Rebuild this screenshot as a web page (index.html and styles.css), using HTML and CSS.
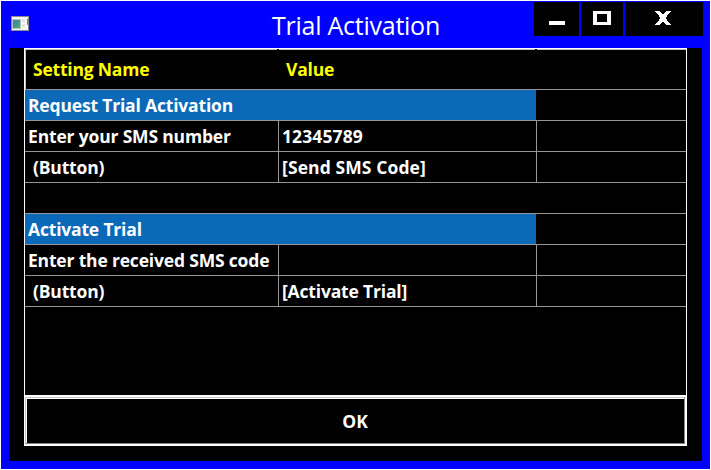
FILE: index.html
```html
<!DOCTYPE html>
<html lang="en">
<head>
<meta charset="utf-8">
<title>Trial Activation</title>
<link rel="stylesheet" href="styles.css">
</head>
<body>
<div class="window">
  <header class="titlebar">
    <svg class="app-icon" width="18" height="15" viewBox="0 0 18 15" shape-rendering="crispEdges">
      <defs><linearGradient id="g" x1="0" y1="0" x2="1" y2="1"><stop offset="0" stop-color="#4a78b4"/><stop offset=".5" stop-color="#3c9690"/><stop offset="1" stop-color="#5cab6c"/></linearGradient></defs>
      <path fill="#8c8c8c" d="M0 0h18v15H0z"/>
      <path fill="#f6f6f6" d="M1 1h16v13H1z"/>
      <path fill="#b8c4c4" d="M1 3h9v10H1z"/>
      <path fill="url(#g)" d="M2 4h7v8H2z"/>
      <path fill="#e2e2e2" d="M11 3h3v3h-3zM11 8h3v3h-3z"/>
      <path fill="url(#g)" d="M16 3h1v6h-1z"/>
    </svg>
    <h1 class="title">Trial Activation</h1>
    <div class="controls">
      <button class="ctl min" aria-label="Minimize"><svg width="45" height="34" shape-rendering="crispEdges"><path fill="#fff" d="M15 19h16v4H15z"/></svg></button>
      <button class="ctl max" aria-label="Maximize"><svg width="42" height="34" shape-rendering="crispEdges"><path fill="#fff" fill-rule="evenodd" d="M12 9h18v14H12zM16 12v8h10v-8z"/></svg></button>
      <button class="ctl close" aria-label="Close"><svg width="78" height="34" shape-rendering="crispEdges"><path fill="#fff" d="M30 9h5l3 4 3-4h5l-5.500 7 5.500 7h-5l-3-4-3 4h-5l5.500-7z"/></svg></button>
    </div>
  </header>
  <main class="client">
    <div class="list">
      <div class="row head"><div class="cell">Setting Name</div><div class="cell">Value</div><div class="cell"></div></div>
      <div class="row group"><div class="cell">Request Trial Activation</div><div class="cell"></div></div>
      <div class="row"><div class="cell tight">Enter your SMS number</div><div class="cell wide">12345789</div><div class="cell"></div></div>
      <div class="row"><div class="cell indent">(Button)</div><div class="cell wide">[Send SMS Code]</div><div class="cell"></div></div>
      <div class="row blank"></div>
      <div class="row group"><div class="cell">Activate Trial</div><div class="cell"></div></div>
      <div class="row"><div class="cell">Enter the received SMS code</div><div class="cell"></div><div class="cell"></div></div>
      <div class="row"><div class="cell indent">(Button)</div><div class="cell">[Activate Trial]</div><div class="cell"></div></div>
    </div>
    <button class="ok"><span class="ok-face">OK</span></button>
  </main>
</div>
</body>
</html>
```
FILE: styles.css
```css
* { box-sizing: border-box; }
body { margin: 0; width: 711px; height: 470px; background: #fff; overflow: hidden; font-family: "Open Sans", "Noto Sans", sans-serif; }
button { margin: 0; padding: 0; border: 0; font: inherit; color: inherit; }
.window { width: 711px; height: 470px; border: 1px solid #fff; background: #00f; padding: 0 8px 8px; }
.titlebar { height: 47px; display: grid; grid-template-columns: 263px 262px 1fr; align-items: start; }
.app-icon { display: block; margin: 15px 0 0 2px; }
.title { margin: 0; padding-top: 4px; font-size: 25px; line-height: 40px; font-weight: 400; letter-spacing: -.25px; color: #fff; white-space: nowrap; }
.controls { display: flex; gap: 2px; margin: 1px -2px 0 0; }
.ctl { height: 34px; background: #000; }
.ctl svg { display: block; }
.client { height: 413px; background: #000; padding: 0 15px 15px; color: #fff; font-size: 17.5px; font-weight: 700; }
.list { height: 347px; border: 1px solid #fff; border-bottom: 0; }
.row { display: grid; grid-template-columns: 254px 258px 1fr; height: 31px; border-bottom: 1px solid #969696; line-height: 30px; }
.cell { padding-left: 3px; white-space: nowrap; letter-spacing: -.18px; }
.cell:nth-child(-n+2) { border-right: 1px solid #969696; }
.cell.tight { letter-spacing: -.17px; }
.cell.wide { letter-spacing: .1px; }
.cell.indent { padding-left: 8px; }
.head { height: 41px; line-height: 39px; color: #ff0; border-left: 1px solid #c0c0c0; grid-template-columns: 251px 256px 1fr; gap: 2px; }
.head .cell { padding-left: 7px; border-top: 1px solid #c0c0c0; letter-spacing: -.2px; }
.head .cell:nth-child(-n+2), .group .cell:nth-child(-n+2) { border-right: 0; }
.group { grid-template-columns: 254px 257px 1fr; }
.group .cell { background: #0b69b8; }
.ok { display: block; width: 663px; height: 51px; border: solid #fff; border-width: 2px 2px 2px 1px; background: #000; }
.ok-face { display: block; height: 47px; border: 1px solid #808080; border-top-color: #c0c0c0; border-left-color: #c0c0c0; box-shadow: inset 1px 1px #fff; line-height: 47px; text-align: center; }
```
